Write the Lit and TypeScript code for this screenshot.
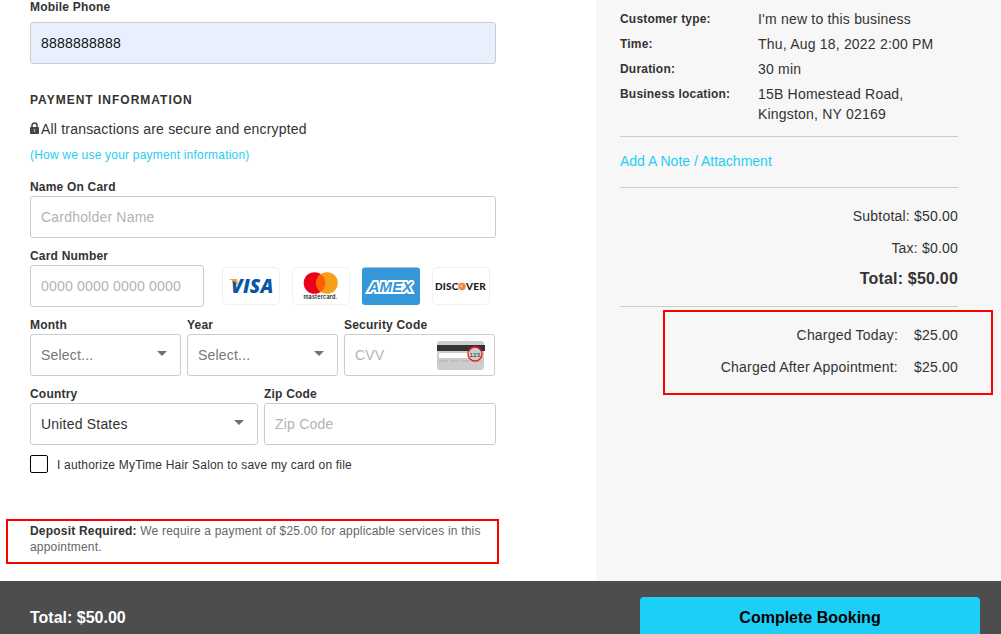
import { LitElement, html, css, svg } from "lit";
import { customElement, property } from "lit/decorators.js";

const lockIcon = html`
  <svg class="lock" width="9" height="12" viewBox="0 0 9 12" aria-hidden="true">
    <path d="M2 5.5V3.4a2.5 2.5 0 0 1 5 0v2.1" fill="none" stroke="#444" stroke-width="1.5" />
    <rect x="0" y="5" width="9" height="7" rx="0.8" fill="#444" />
    <path d="M4.5 7v3" stroke="#bbb" stroke-width="1.2" />
  </svg>
`;

const caret = html`
  <svg class="caret" width="10" height="5" viewBox="0 0 10 5" aria-hidden="true">
    <path d="M0 0h10L5 5z" fill="#707070" />
  </svg>
`;

const brands = [
  {
    name: "Visa",
    art: svg`
      <rect x="0.5" y="0.5" width="57" height="37" rx="4" fill="#fff" stroke="#f0f0f0" />
      <text x="9" y="26" font-family="Open Sans, sans-serif" font-size="19" font-weight="800" font-style="italic" fill="#0a57a4">VISA</text>
      <path d="M7.500 12h6c1.200 0 1.700.5 1.900 1.500l1 5.500c-1.800-3.500-4.600-5.800-8.900-6.600z" fill="#f7a428" />
    `,
  },
  {
    name: "Mastercard",
    art: svg`
      <rect x="0.5" y="0.5" width="57" height="37" rx="4" fill="#fff" stroke="#f0f0f0" />
      <circle cx="22.500" cy="16" r="10.800" fill="#eb001b" />
      <circle cx="35" cy="16" r="10.800" fill="#f79e1b" />
      <path d="M28.750 7.200a10.800 10.800 0 0 1 0 17.600a10.800 10.800 0 0 1 0-17.600z" fill="#ff5f00" />
      <text x="28.500" y="32" text-anchor="middle" font-family="Inter, sans-serif" font-size="5.500" font-weight="600" fill="#222">mastercard.</text>
    `,
  },
  {
    name: "American Express",
    art: svg`
      <rect x="0" y="0.500" width="58" height="37.500" rx="3" fill="#3498d8" />
      <text x="28.500" y="24.500" text-anchor="middle" font-family="Liberation Sans, sans-serif" font-size="15" font-weight="700" font-style="italic" fill="#3498d8" stroke="#fff" stroke-width="4" stroke-linejoin="miter" stroke-miterlimit="2" paint-order="stroke">AMEX</text>
    `,
  },
  {
    name: "Discover",
    art: svg`
      <rect x="0.5" y="0.5" width="57" height="37" rx="4" fill="#fff" stroke="#f0f0f0" />
      <text x="3" y="23" font-family="Lato, sans-serif" font-size="10" font-weight="900" fill="#1c1c1c">DISC</text>
      <circle cx="30" cy="19.500" r="3.700" fill="#f58345" />
      <circle cx="29.500" cy="19" r="1.500" fill="#fbb488" />
      <text x="34" y="23" font-family="Lato, sans-serif" font-size="10" font-weight="900" fill="#1c1c1c">VER</text>
    `,
  },
];

@customElement("select-box")
class SelectBox extends LitElement {
  @property() label = "";
  @property() value = "";
  @property({ type: Boolean }) muted = false;

  static styles = css`
    :host {
      display: block;
      min-width: 0;
      font-family: "Liberation Sans", Arial, sans-serif;
    }
    .label {
      display: block;
      margin-bottom: 2px;
      font-size: 12px;
      font-weight: 700;
      line-height: 14px;
      letter-spacing: 0.2px;
      color: #333;
    }
    .wrap {
      display: grid;
      align-items: center;
    }
    .wrap > * {
      grid-area: 1 / 1;
    }
    .control {
      width: 100%;
      height: 42px;
      padding: 0 30px 0 10px;
      box-sizing: border-box;
      appearance: none;
      border: 1px solid #ccc;
      border-radius: 3px;
      background: #fff;
      font: 14px "Liberation Sans", Arial, sans-serif;
      letter-spacing: 0.2px;
      color: #333;
    }
    .muted {
      color: #777;
    }
    .caret {
      justify-self: end;
      margin: 0 14px 4px 0;
      pointer-events: none;
    }
  `;

  render() {
    return html`
      <label class="label" for="control">${this.label}</label>
      <div class="wrap">
        <select id="control" class="control ${this.muted ? "muted" : ""}">
          <option>${this.value}</option>
        </select>
        ${caret}
      </div>
    `;
  }
}

@customElement("app-root")
class AppRoot extends LitElement {
  static styles = css`
    :host {
      display: flex;
      flex-direction: column;
      min-height: 100vh;
      font-family: "Liberation Sans", Arial, sans-serif;
      font-size: 14px;
      line-height: 20px;
      letter-spacing: 0.2px;
      color: #333;
      background: #fff;
    }
    * {
      box-sizing: border-box;
    }
    a {
      color: #1fcdf3;
      text-decoration: none;
    }
    .page {
      flex: 1;
      display: grid;
      grid-template-columns: minmax(0, 1fr) 405px;
    }
    .form {
      padding: 0 100px 17px 30px;
    }
    .label {
      display: block;
      margin-bottom: 2px;
      font-size: 12px;
      font-weight: 700;
      line-height: 14px;
    }
    .phone .label {
      margin-bottom: 8px;
    }
    .input {
      display: block;
      width: 100%;
      height: 42px;
      padding: 0 10px;
      border: 1px solid #ccc;
      border-radius: 3px;
      background: #fff;
      font: inherit;
      letter-spacing: inherit;
      color: #111;
    }
    .input::placeholder {
      color: #b3b3b3;
      opacity: 1;
    }
    .filled {
      background: #e8f0fe;
    }
    .heading {
      margin: 28px 0 11px;
      font-size: 12px;
      font-weight: 700;
      line-height: 16px;
      letter-spacing: 1px;
    }
    .secure {
      display: flex;
      align-items: center;
      gap: 2px;
      margin: 0;
    }
    .lock {
      margin-bottom: 2px;
    }
    .privacy {
      margin: 8px 0 17px;
      font-size: 12px;
      line-height: 16px;
    }
    .fields {
      display: grid;
      gap: 11px;
    }
    .card-row {
      display: flex;
      align-items: flex-end;
      gap: 18px;
    }
    .number {
      flex: 1;
      min-width: 0;
    }
    .brands {
      display: flex;
      gap: 12px;
      margin: 0 6px 2px 0;
    }
    .brand {
      display: block;
    }
    .thirds {
      display: grid;
      grid-template-columns: repeat(3, minmax(0, 1fr));
      gap: 6px;
      margin-right: 1px;
    }
    .halves {
      display: grid;
      grid-template-columns: 57fr 58fr;
      gap: 6px;
    }
    .cvv {
      display: grid;
      align-items: center;
    }
    .cvv > * {
      grid-area: 1 / 1;
    }
    .cvv-art {
      justify-self: end;
      margin-right: 10px;
    }
    .authorize {
      display: flex;
      align-items: flex-start;
      gap: 9px;
      margin-top: 10px;
      font-size: 12px;
      line-height: 20px;
    }
    .check {
      appearance: none;
      flex: none;
      width: 18px;
      height: 18px;
      margin: 0;
      border: 1px solid #000;
      border-radius: 2px;
      background: #fff;
    }
    .check:checked {
      box-shadow: inset 0 0 0 3px #fff;
      background: #1ccff7;
    }
    .deposit {
      margin: 44px -3px 0 -24px;
      padding: 2px 12px 7px 22px;
      border: 2px solid #f00;
      font-size: 12px;
      line-height: 16px;
      color: #666;
    }
    .deposit strong {
      color: #333;
    }
    .summary {
      padding: 9px 43px 17px 24px;
      background: #f7f7f7;
    }
    .details {
      display: grid;
      grid-template-columns: 138px minmax(0, 1fr);
      row-gap: 5px;
      margin: 0 0 12px;
    }
    .term {
      font-size: 12px;
      font-weight: 700;
    }
    .value {
      margin: 0;
    }
    .note {
      padding: 14px 0 16px;
      border: 1px solid #ccc;
      border-width: 1px 0;
      letter-spacing: 0;
    }
    .totals {
      display: grid;
      gap: 12px;
      padding: 18px 0 17px;
      border-bottom: 1px solid #ccc;
      text-align: right;
    }
    .grand {
      margin-top: -1px;
      font-size: 16px;
      font-weight: 700;
    }
    .charges {
      display: grid;
      grid-template-columns: 1fr auto;
      gap: 12px 16px;
      margin: 3px -35px 0 43px;
      padding: 13px 33px 16px 0;
      border: 2px solid #f00;
      text-align: right;
    }
    .bar {
      position: sticky;
      bottom: 0;
      display: flex;
      justify-content: space-between;
      padding: 16px 21px 0 30px;
      background: #4d4d4d;
      font-size: 16px;
      font-weight: 700;
      letter-spacing: 0;
      color: #fff;
    }
    .bar-total {
      padding-top: 11px;
    }
    .book {
      width: 340px;
      padding: 11px 12px 6px;
      border: 0;
      border-radius: 4px 4px 0 0;
      background: #1ccff7;
      font: inherit;
      color: #000;
    }
  `;

  render() {
    return html`
      <main class="page">
        <form class="form">
          <div class="phone">
            <label class="label" for="phone">Mobile Phone</label>
            <input class="input filled" id="phone" type="tel" value="8888888888" />
          </div>
          <h2 class="heading">PAYMENT INFORMATION</h2>
          <p class="secure">${lockIcon}<span>All transactions are secure and encrypted</span></p>
          <p class="privacy"><a href="#privacy">(How we use your payment information)</a></p>
          <div class="fields">
            <div>
              <label class="label" for="holder">Name On Card</label>
              <input class="input" id="holder" placeholder="Cardholder Name" />
            </div>
            <div class="card-row">
              <div class="number">
                <label class="label" for="number">Card Number</label>
                <input class="input" id="number" placeholder="0000 0000 0000 0000" />
              </div>
              <div class="brands">
                ${brands.map(
                  (b) => html`<svg class="brand" width="58" height="38" viewBox="0 0 58 38" role="img" aria-label=${b.name}>${b.art}</svg>`
                )}
              </div>
            </div>
            <div class="thirds">
              <select-box label="Month" value="Select..." muted></select-box>
              <select-box label="Year" value="Select..." muted></select-box>
              <div>
                <label class="label" for="cvv">Security Code</label>
                <div class="cvv">
                  <input class="input" id="cvv" placeholder="CVV" />
                  <svg class="cvv-art" width="48" height="29" viewBox="0 0 48 29" aria-hidden="true">
                    <rect width="47" height="29" rx="3" fill="#ccc" />
                    <rect y="4" width="48" height="6" fill="#333" />
                    <rect x="2" y="12" width="31" height="5" fill="#fff" />
                    <path d="M2 20h9M13 20h9M24 20h9M35 20h9" stroke="#aaa" stroke-dasharray="2 0.5" />
                    <circle cx="38" cy="13" r="6.500" fill="#ccc" />
                    <text x="38" y="15.500" text-anchor="middle" font-family="Liberation Sans, sans-serif" font-size="6" fill="#222">123</text>
                    <circle cx="38" cy="13" r="7" fill="none" stroke="#f01818" stroke-width="1.300" />
                  </svg>
                </div>
              </div>
            </div>
            <div class="halves">
              <select-box label="Country" value="United States"></select-box>
              <div>
                <label class="label" for="zip">Zip Code</label>
                <input class="input" id="zip" placeholder="Zip Code" />
              </div>
            </div>
          </div>
          <label class="authorize">
            <input class="check" type="checkbox" />
            <span>I authorize MyTime Hair Salon to save my card on file</span>
          </label>
          <div class="deposit">
            <strong>Deposit Required:</strong> We require a payment of $25.00 for applicable services in this appointment.
          </div>
        </form>
        <aside class="summary">
          <dl class="details">
            <dt class="term">Customer type:</dt>
            <dd class="value">I'm new to this business</dd>
            <dt class="term">Time:</dt>
            <dd class="value">Thu, Aug 18, 2022 2:00 PM</dd>
            <dt class="term">Duration:</dt>
            <dd class="value">30 min</dd>
            <dt class="term">Business location:</dt>
            <dd class="value">15B Homestead Road,<br />Kingston, NY 02169</dd>
          </dl>
          <div class="note"><a href="#note">Add A Note / Attachment</a></div>
          <div class="totals">
            <div>Subtotal: $50.00</div>
            <div>Tax: $0.00</div>
            <div class="grand">Total: $50.00</div>
          </div>
          <div class="charges">
            <span>Charged Today:</span><span>$25.00</span>
            <span>Charged After Appointment:</span><span>$25.00</span>
          </div>
        </aside>
      </main>
      <footer class="bar">
        <span class="bar-total">Total: $50.00</span>
        <button class="book" type="button">Complete Booking</button>
      </footer>
    `;
  }
}
